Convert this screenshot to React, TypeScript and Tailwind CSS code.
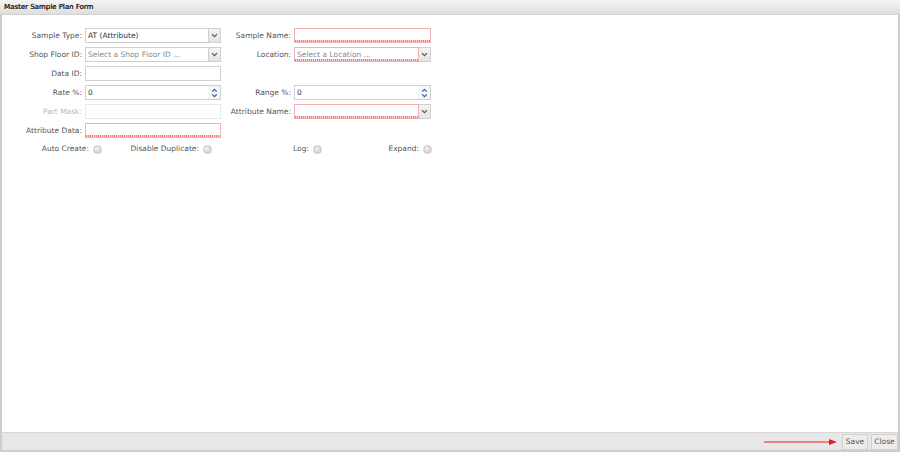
import React from "react";

const font = { fontFamily: '"DejaVu Sans", Verdana, sans-serif' };

function Chevron() {
  return (
    <svg width="7" height="5" viewBox="0 0 7 5">
      <path d="M1 1.2 L3.5 3.7 L6 1.2" fill="none" stroke="#555" strokeWidth="1.2" />
    </svg>
  );
}

function RedLine() {
  return (
    <div className="pointer-events-none absolute bottom-0 left-0 right-0 h-[2px] bg-[repeating-linear-gradient(90deg,#f07a7a_0_1px,#fbd6d6_1px_2px)]" />
  );
}

function TextBox({ w, invalid, disabled, value }: { w: string; invalid?: boolean; disabled?: boolean; value?: string }) {
  return (
    <div
      className={
        "relative h-[15px] border flex items-center px-[2px] text-[#333] " +
        w +
        (invalid ? " border-[#f3b0b0] bg-white" : disabled ? " border-[#e8e8e8] bg-white" : " border-[#d0d0d0] bg-white")
      }
    >
      {value}
      {invalid && <RedLine />}
    </div>
  );
}

function Select({ w, placeholder, value, invalid }: { w: string; placeholder?: string; value?: string; invalid?: boolean }) {
  return (
    <div className={"flex h-[15px] " + w}>
      <div
        className={
          "relative flex-1 border flex items-center px-[2px] bg-white " +
          (invalid ? "border-[#f3b0b0]" : "border-[#d0d0d0]")
        }
      >
        {value ? <span className="text-[#333]">{value}</span> : <span className="text-[#8a8a8a]">{placeholder}</span>}
        {invalid && <RedLine />}
      </div>
      <div className="w-[12px] h-full border border-l-0 border-[#d0d0d0] bg-[linear-gradient(#f4f4f4,#e4e4e4)] flex items-center justify-center">
        <Chevron />
      </div>
    </div>
  );
}

function Spinner({ w, value }: { w: string; value: string }) {
  return (
    <div className={"flex h-[15px] border border-[#d0d0d0] bg-white " + w}>
      <div className="flex-1 flex items-center px-[2px] text-[#333]">{value}</div>
      <div className="w-[12px] flex flex-col items-center justify-center bg-[#f6f6f6]">
        <svg width="7" height="12" viewBox="0 0 7 12">
          <path d="M1.2 4.6 L3.5 2.3 L5.8 4.6" fill="none" stroke="#3b64a8" strokeWidth="1.3" />
          <path d="M1.2 7.4 L3.5 9.7 L5.8 7.4" fill="none" stroke="#3b64a8" strokeWidth="1.3" />
        </svg>
      </div>
    </div>
  );
}

function Label({ children, w, muted }: { children: React.ReactNode; w: string; muted?: boolean }) {
  return (
    <div className={"text-right pr-[3px] whitespace-nowrap " + w + (muted ? " text-[#b8b8b8]" : " text-[#555]")}>
      {children}
    </div>
  );
}

function Radio() {
  return (
    <span className="inline-block w-[9px] h-[9px] rounded-full border border-[#c8c8c8] bg-[radial-gradient(circle_at_40%_35%,#f2f2f2,#c6c6c6)] ml-[4px] mt-[1px]" />
  );
}

function Row({ children }: { children: React.ReactNode }) {
  return <div className="flex items-center h-[19px]">{children}</div>;
}

export default function App() {
  return (
    <div className="w-[900px] h-[452px] flex flex-col bg-white text-[7.5px] leading-none overflow-hidden" style={font}>
      <div className="h-[15px] flex items-center pl-[4px] bg-[linear-gradient(#f5f5f5,#dedede)] border-b border-[#d2d2d2] text-[#222] text-[7px] [text-shadow:0.3px_0_0_#222]">
        Master Sample Plan Form
      </div>
      <div className="flex-1 flex flex-col border-l-2 border-r-2 border-b-2 border-[#cdcdcd]">
        <div className="flex-1 pt-[11px]">
          <Row>
            <Label w="w-[83px]">Sample Type:</Label>
            <Select w="w-[136px]" value="AT (Attribute)" />
            <Label w="w-[73px]">Sample Name:</Label>
            <TextBox w="w-[137px]" invalid />
          </Row>
          <Row>
            <Label w="w-[83px]">Shop Floor ID:</Label>
            <Select w="w-[136px]" placeholder="Select a Shop Floor ID ..." />
            <Label w="w-[73px]">Location:</Label>
            <Select w="w-[137px]" placeholder="Select a Location ..." invalid />
          </Row>
          <Row>
            <Label w="w-[83px]">Data ID:</Label>
            <TextBox w="w-[136px]" />
          </Row>
          <Row>
            <Label w="w-[83px]">Rate %:</Label>
            <Spinner w="w-[136px]" value="0" />
            <Label w="w-[73px]">Range %:</Label>
            <Spinner w="w-[137px]" value="0" />
          </Row>
          <Row>
            <Label w="w-[83px]" muted>Part Mask:</Label>
            <TextBox w="w-[136px]" disabled />
            <Label w="w-[73px]">Attribute Name:</Label>
            <Select w="w-[137px]" invalid />
          </Row>
          <Row>
            <Label w="w-[83px]">Attribute Data:</Label>
            <TextBox w="w-[136px]" invalid />
          </Row>
          <div className="flex items-center h-[18px] text-[#555]">
            <div className="w-[100px] flex justify-end items-center">Auto Create:<Radio /></div>
            <div className="w-[110px] flex justify-end items-center">Disable Duplicate:<Radio /></div>
            <div className="w-[110px] flex justify-end items-center">Log:<Radio /></div>
            <div className="w-[110px] flex justify-end items-center">Expand:<Radio /></div>
          </div>
        </div>
        <div className="h-[18px] bg-[#e7e7e7] border-t border-[#d6d6d6] flex items-center justify-end gap-[3px]">
          <svg width="73" height="8" viewBox="0 0 73 8" className="mr-[2px]">
            <line x1="0" y1="4" x2="66" y2="4" stroke="#e02020" strokeWidth="1.2" />
            <path d="M65 1 L73 4 L65 7 Z" fill="#e02020" />
          </svg>
          <div className="h-[16px] w-[26px] flex items-center justify-center border border-[#d0d0d0] bg-[#ececec] text-[#555]">Save</div>
          <div className="h-[16px] w-[27px] flex items-center justify-center border border-[#d0d0d0] bg-[#ececec] text-[#555]">Close</div>
        </div>
      </div>
    </div>
  );
}
